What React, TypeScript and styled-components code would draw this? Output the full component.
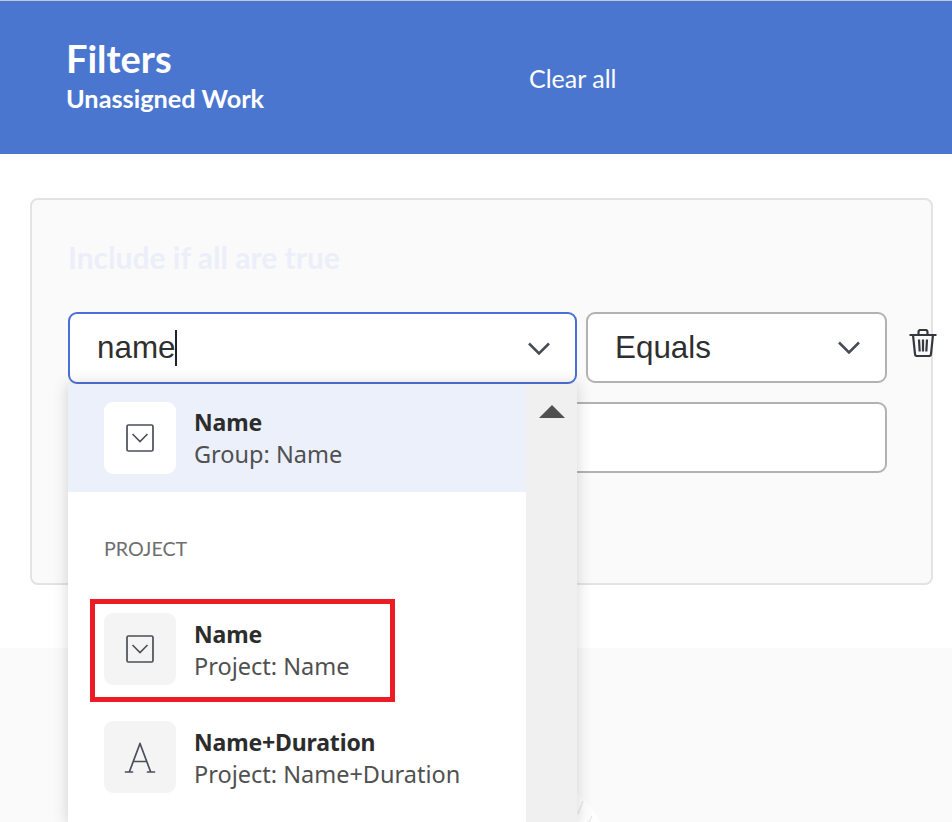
import React from "react";
import styled, { createGlobalStyle } from "styled-components";

const Global = createGlobalStyle`
  html, body { margin: 0; padding: 0; background: #fff; }
  * { box-sizing: border-box; }
`;

const Page = styled.div`
  width: 952px;
  height: 822px;
  position: relative;
  overflow: hidden;
  display: flex;
  flex-direction: column;
  background: #fff;
  border-top: 1px solid #c4c8d0;
  font-family: "Lato", "Noto Sans", sans-serif;
`;

const Header = styled.header`
  height: 153px;
  flex: none;
  background: #4a76d0;
  color: #fff;
  display: flex;
  align-items: center;
  padding: 0 0 3px 66px;
`;

const Titles = styled.div`
  width: 463px;
  display: flex;
  flex-direction: column;
`;

const Title = styled.h1`
  margin: 0;
  font-size: 38px;
  line-height: 43px;
  font-weight: 700;
`;

const Subtitle = styled.div`
  font-size: 25.3px;
  line-height: 36px;
  font-weight: 700;
`;

const ClearAll = styled.button`
  border: 0;
  background: none;
  padding: 0;
  color: #fff;
  font: 400 25px/32px "Lato", sans-serif;
  margin-top: 3px;
`;

const Body = styled.main`
  height: 494px;
  flex: none;
  padding: 44px 19px 0 30px;
`;

const Panel = styled.section`
  width: 903px;
  height: 387px;
  background: #fafafa;
  border: 2px solid #e3e3e3;
  border-radius: 8px;
  padding: 37px 36px 0;
`;

const PanelHeading = styled.h2`
  margin: 0 0 35px;
  font-size: 30px;
  line-height: 40px;
  font-weight: 700;
  color: #eceff9;
`;

const Row = styled.div`
  display: flex;
  gap: 9px;
  align-items: flex-start;
`;

const Field = styled.div<{ $w: number; $focused?: boolean; $h?: number }>`
  width: ${(p) => p.$w}px;
  height: ${(p) => p.$h ?? 71}px;
  flex: none;
  background: #fff;
  border: 2px solid ${(p) => (p.$focused ? "#4a6fd8" : "#b2b2b2")};
  border-radius: 9px;
  display: flex;
  align-items: center;
  justify-content: space-between;
  padding: 0 25px 0 27px;
  font: 400 31.4px/40px "Liberation Sans", Arial, sans-serif;
  color: #2f2f2f;
`;

const ComboWrap = styled.div`
  position: relative;
  flex: none;
`;

const TypedText = styled.span`
  display: inline-flex;
  align-items: center;
`;

const Caret = styled.span`
  width: 2px;
  height: 36px;
  background: #222;
  margin-left: -1px;
`;

const Trash = styled.svg`
  flex: none;
  margin: 17px 0 0 13px;
`;

const ValueField = styled(Field)`
  margin-top: 18px;
`;

const Dropdown = styled.div`
  position: absolute;
  left: 0;
  top: 72px;
  width: 509px;
  height: 440px;
  display: flex;
  background: #fff;
  box-shadow: 0 0 14px rgba(60, 60, 70, 0.22);
  z-index: 2;
`;

const List = styled.ul`
  list-style: none;
  margin: 0;
  padding: 0;
  width: 458px;
  flex: none;
`;

const Item = styled.li<{ $active?: boolean }>`
  height: 108px;
  display: flex;
  align-items: center;
  gap: 18px;
  padding: 0 36px;
  background: ${(p) => (p.$active ? "#ebf0fa" : "#fff")};
`;

const IconTile = styled.div<{ $active?: boolean }>`
  width: 72px;
  height: 72px;
  flex: none;
  border-radius: 9px;
  background: ${(p) => (p.$active ? "#fff" : "#f4f4f4")};
  display: flex;
  align-items: center;
  justify-content: center;
`;

const ItemText = styled.div<{ $low?: boolean }>`
  display: flex;
  flex-direction: column;
  margin-top: ${(p) => (p.$low ? 2 : 0)}px;
  font-family: "Noto Sans", sans-serif;
`;

const ItemName = styled.div`
  font-size: 23px;
  line-height: 32px;
  font-weight: 700;
  color: #2c2c2c;
  letter-spacing: -0.15px;
`;

const ItemSub = styled.div`
  font-size: 23.5px;
  line-height: 32px;
  color: #505050;
`;

const SectionLabel = styled.li`
  height: 103px;
  padding: 42px 36px 0;
  font: 400 19.7px/30px "Lato", sans-serif;
  color: #6e6e6e;
`;

const Scrollbar = styled.div`
  flex: 1;
  background: #f0f0f0;
  display: flex;
  justify-content: center;
  padding-top: 21px;
`;

const ScrollArrow = styled.div`
  width: 0;
  height: 0;
  border-left: 13px solid transparent;
  border-right: 13px solid transparent;
  border-bottom: 13px solid #505050;
`;

const Highlight = styled.div`
  position: absolute;
  left: 22px;
  top: 215px;
  width: 305px;
  height: 103px;
  border: 5px solid #ed1c24;
  pointer-events: none;
`;

const Footer = styled.footer`
  flex: 1;
  background: #fafafa;
`;

const BackdropMark = styled.svg`
  position: absolute;
  left: 577px;
  top: 793px;
`;

const Chevron = () => (
  <svg width="22" height="13" viewBox="0 0 22 13" fill="none">
    <path d="M1 1.5 11 11.5 21 1.5" stroke="#464c56" strokeWidth="2.5" />
  </svg>
);

const DropdownIcon = () => (
  <svg width="28" height="28" viewBox="0 0 28 28" fill="none" stroke="#4b4e58">
    <rect x="1" y="1" width="26" height="26" rx="1.5" strokeWidth="1.7" />
    <path d="M6.5 10 14 17.5 21.5 10" strokeWidth="1.6" />
  </svg>
);

const TextIcon = () => (
  <svg width="32" height="31" viewBox="0 0 32 31" fill="none" stroke="#4b4e58" strokeWidth="1.7" strokeLinecap="round">
    <path d="M16 1.5 5.5 29.5M16 1.5 26.5 29.5M9.5 19.5h13M1.5 30h7M23.5 30h7" />
  </svg>
);

const TrashIcon = () => (
  <Trash width="28" height="28" viewBox="0 0 28 28" fill="none" stroke="#33373e" strokeWidth="2.2">
    <path d="M.5 6h27M9.5 6V3a2 2 0 0 1 2-2h5a2 2 0 0 1 2 2v3" />
    <path d="M4 6 6 25a2 2 0 0 0 2 2h12a2 2 0 0 0 2-2l2-19" />
    <path d="M10 10.5l.7 12M14 10.5v12M18 10.5l-.7 12" />
  </Trash>
);

export default function App() {
  return (
    <Page>
      <Global />
      <Header>
        <Titles>
          <Title>Filters</Title>
          <Subtitle>Unassigned Work</Subtitle>
        </Titles>
        <ClearAll>Clear all</ClearAll>
      </Header>
      <Body>
        <Panel>
          <PanelHeading>Include if all are true</PanelHeading>
          <Row>
            <ComboWrap>
              <Field $w={509} $h={72} $focused>
                <TypedText>
                  name
                  <Caret />
                </TypedText>
                <Chevron />
              </Field>
              <Dropdown>
                <List>
                  <Item $active>
                    <IconTile $active>
                      <DropdownIcon />
                    </IconTile>
                    <ItemText>
                      <ItemName>Name</ItemName>
                      <ItemSub>Group: Name</ItemSub>
                    </ItemText>
                  </Item>
                  <SectionLabel>PROJECT</SectionLabel>
                  <Item>
                    <IconTile>
                      <DropdownIcon />
                    </IconTile>
                    <ItemText $low>
                      <ItemName>Name</ItemName>
                      <ItemSub>Project: Name</ItemSub>
                    </ItemText>
                  </Item>
                  <Item>
                    <IconTile>
                      <TextIcon />
                    </IconTile>
                    <ItemText $low>
                      <ItemName>Name+Duration</ItemName>
                      <ItemSub>Project: Name+Duration</ItemSub>
                    </ItemText>
                  </Item>
                </List>
                <Scrollbar>
                  <ScrollArrow />
                </Scrollbar>
                <Highlight />
              </Dropdown>
            </ComboWrap>
            <Field $w={301}>
              Equals
              <Chevron />
            </Field>
            <TrashIcon />
          </Row>
          <ValueField $w={819} />
        </Panel>
      </Body>
      <Footer />
      <BackdropMark width="30" height="29" viewBox="0 0 30 29" fill="none">
        <path d="M0 0C10 8 18 17 24 29H0Z" fill="#ffffff" fillOpacity="0.7" />
        <path d="M1 20 6 7M11 29l4-7" stroke="#e6e6ea" strokeWidth="1.2" />
      </BackdropMark>
    </Page>
  );
}
